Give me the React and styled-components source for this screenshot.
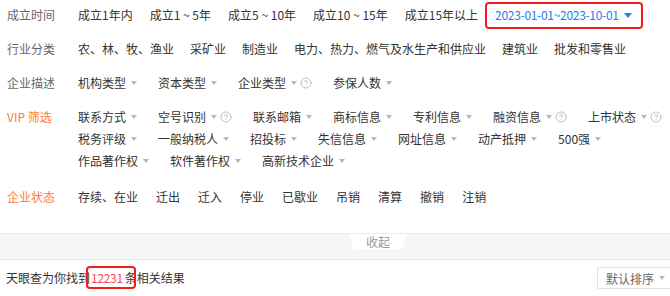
import React from 'react';
import styled, { createGlobalStyle } from 'styled-components';
import { CircleHelp } from 'lucide-react';

const GlobalStyle = createGlobalStyle`
  body {
    margin: 0;
    background: #fff;
    overflow: hidden;
    font-family: "Noto Sans CJK SC", "Noto Sans", sans-serif;
    font-size: 12px;
    color: #333;
  }
`;

const founded = ['成立1年内', '成立1 ~ 5年', '成立5 ~ 10年', '成立10 ~ 15年', '成立15年以上'];
const industries = ['农、林、牧、渔业', '采矿业', '制造业', '电力、热力、燃气及水生产和供应业', '建筑业', '批发和零售业'];
const profile = [{ name: '机构类型' }, { name: '资本类型' }, { name: '企业类型', help: true }, { name: '参保人数' }];
const vip = [
  { name: '联系方式' },
  { name: '空号识别', help: true },
  { name: '联系邮箱' },
  { name: '商标信息' },
  { name: '专利信息' },
  { name: '融资信息', help: true },
  { name: '上市状态', help: true },
  { name: '税务评级' },
  { name: '一般纳税人' },
  { name: '招投标' },
  { name: '失信信息' },
  { name: '网址信息' },
  { name: '动产抵押' },
  { name: '500强' },
  { name: '作品著作权' },
  { name: '软件著作权' },
  { name: '高新技术企业' },
];
const statuses = ['存续、在业', '迁出', '迁入', '停业', '已歇业', '吊销', '清算', '撤销', '注销'];

function App() {
  return (
    <>
      <GlobalStyle />
      <St.Panel>
        <St.Row>
          <St.Label>成立时间</St.Label>
          <St.Options $gap={17}>
            {founded.map((item) => (
              <St.Option key={item}>{item}</St.Option>
            ))}
            <St.DateOption>
              2023-01-01~2023-10-01
              <St.BlueCaret />
            </St.DateOption>
          </St.Options>
        </St.Row>

        <St.Row>
          <St.Label>行业分类</St.Label>
          <St.Options $gap={16}>
            {industries.map((item) => (
              <St.Option key={item}>{item}</St.Option>
            ))}
          </St.Options>
        </St.Row>

        <St.Row>
          <St.Label>企业描述</St.Label>
          <St.Options $gap={21}>
            {profile.map((item) => (
              <DropOption key={item.name} {...item} />
            ))}
          </St.Options>
        </St.Row>

        <St.Row $space={14}>
          <St.Label $accent>VIP 筛选</St.Label>
          <St.Options $gap={21}>
            {vip.map((item) => (
              <DropOption key={item.name} {...item} />
            ))}
          </St.Options>
        </St.Row>

        <St.Row $space={25}>
          <St.Label $accent>企业状态</St.Label>
          <St.Options $gap={18}>
            {statuses.map((item) => (
              <St.Option key={item}>{item}</St.Option>
            ))}
          </St.Options>
        </St.Row>
      </St.Panel>

      <St.CollapseBar>
        <St.CollapseTab>收起</St.CollapseTab>
      </St.CollapseBar>

      <St.ResultBar>
        <St.ResultText>
          天眼查为你找到<St.Count>12231</St.Count>条相关结果
        </St.ResultText>
        <St.SortSelect>
          默认排序
          <St.Caret />
        </St.SortSelect>
      </St.ResultBar>
    </>
  );
}

function DropOption({ name, help }) {
  return (
    <St.Option>
      {name}
      <St.Caret />
      {help && (
        <St.Help>
          <CircleHelp size={12} strokeWidth={1.5} color="#aaa" />
        </St.Help>
      )}
    </St.Option>
  );
}

export default App;

const St = {
  Panel: styled.section`
    padding: 4px 0 0 7px;
  `,

  Row: styled.div`
    display: flex;
    line-height: 22px;
    margin-bottom: ${({ $space }) => $space ?? 12}px;
  `,

  Label: styled.div`
    width: 71px;
    flex-shrink: 0;
    color: ${({ $accent }) => ($accent ? '#fb7d36' : '#666')};
  `,

  Options: styled.div`
    flex: 1;
    display: flex;
    flex-wrap: wrap;
    column-gap: ${({ $gap }) => $gap}px;
  `,

  Option: styled.span`
    display: inline-flex;
    align-items: center;
    white-space: nowrap;
    color: #333;
  `,

  DateOption: styled.span`
    position: relative;
    display: inline-flex;
    align-items: center;
    white-space: nowrap;
    letter-spacing: -0.3px;
    color: #1a7ff0;

    &::after {
      content: '';
      position: absolute;
      top: -2px;
      bottom: -3px;
      left: -10px;
      right: -11px;
      border: 2.5px solid #f21c1c;
      border-radius: 4px;
    }
  `,

  BlueCaret: styled.i`
    width: 0;
    height: 0;
    margin-left: 5px;
    border-left: 4px solid transparent;
    border-right: 4px solid transparent;
    border-top: 5px solid #1a7ff0;
  `,

  Caret: styled.i`
    width: 0;
    height: 0;
    margin-left: 5px;
    border-left: 3.5px solid transparent;
    border-right: 3.5px solid transparent;
    border-top: 4px solid #b8b8b8;
  `,

  Help: styled.span`
    display: inline-flex;
    margin-left: 3px;
  `,

  CollapseBar: styled.div`
    height: 25px;
    padding-left: 349px;
    background: #f6f6f6;
    border-top: 1px solid #ececec;
    border-bottom: 1px solid #e6e6e6;
  `,

  CollapseTab: styled.div`
    width: 58px;
    height: 15px;
    line-height: 15px;
    text-align: center;
    color: #999;
    background: #fff;
    clip-path: polygon(0 0, 100% 0, 92% 100%, 8% 100%);
  `,

  ResultBar: styled.div`
    display: flex;
    align-items: center;
    justify-content: space-between;
    height: 36px;
    padding-left: 6px;
    overflow: hidden;
  `,

  ResultText: styled.div`
    line-height: 22px;
    color: #333;
  `,

  Count: styled.span`
    position: relative;
    display: inline-block;
    margin: 0 2px 0 1px;
    letter-spacing: -0.3px;
    color: #f54a4f;

    &::after {
      content: '';
      position: absolute;
      top: -1px;
      bottom: 0;
      left: -5px;
      right: -13px;
      border: 2.5px solid #f21c1c;
      border-radius: 4px;
    }
  `,

  SortSelect: styled.div`
    display: flex;
    align-items: center;
    flex-shrink: 0;
    width: 85px;
    height: 22px;
    margin-right: -12px;
    padding-left: 8px;
    box-sizing: border-box;
    color: #666;
    border: 1px solid #e2e2e2;
    border-radius: 2px;
  `,
};
